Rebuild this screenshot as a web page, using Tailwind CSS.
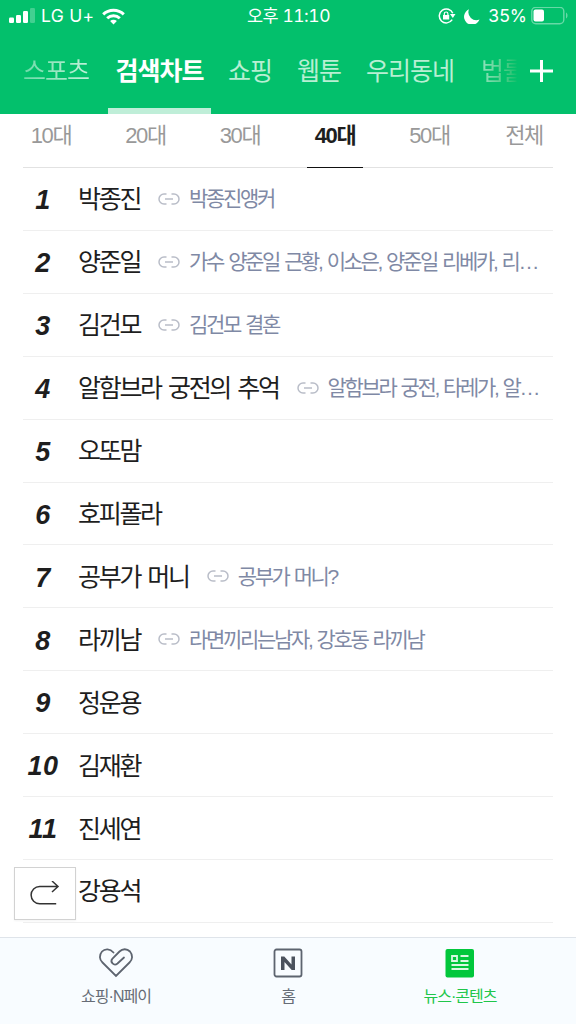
<!DOCTYPE html>
<html lang="ko">
    <head>
        <meta charset="UTF-8">
        <meta name="viewport" content="width=device-width, initial-scale=1.0">

        <script src="https://cdn.jsdelivr.net/npm/@tailwindcss/browser@4"></script>

        <title>검색차트</title>
    </head>
    <body class="bg-white font-['Liberation_Sans','Noto_Sans_CJK_KR',sans-serif]">
        <svg class="hidden">
            <symbol id="link" viewBox="0 0 22 12">
                <path d="M8.500 1H6a5 5 0 0 0 0 10h2.500M13.500 1H16a5 5 0 0 1 0 10h-2.500M7 6h8" fill="none" stroke="currentColor" stroke-width="1.500" />
            </symbol>
        </svg>

        <div class="relative flex flex-col w-[576px] h-[1024px] overflow-hidden">
            <header class="header h-[114px] shrink-0 bg-[#03c06c] text-white">
                <!-- Status bar -->
                <div class="status-bar grid grid-cols-[1fr_auto_1fr] items-center h-8 pl-[9px] pr-[8px] font-['Inter','Noto_Sans_CJK_KR',sans-serif] text-[17.5px] leading-8">
                    <div class="flex items-center">
                        <svg class="w-[26px] h-4" viewBox="0 0 26 16" fill="#fff">
                            <rect x="0" y="9.500" width="5" height="5.500" rx="1.200" />
                            <rect x="7" y="7" width="5" height="8" rx="1.200" />
                            <rect x="14" y="3" width="5" height="12" rx="1.200" />
                            <rect x="21" y="0" width="5" height="15" rx="1.200" opacity=".25" />
                        </svg>
                        <span class="ml-[6px] tracking-[0.3px]">LG U+</span>
                        <svg class="ml-2 w-[23px] h-[17px]" viewBox="0 0 23 17" fill="none" stroke="#fff" stroke-width="3">
                            <path d="M1.200 6.300a14.800 14.800 0 0 1 20.600 0" />
                            <path d="M5.200 10.300a9 9 0 0 1 12.600 0" />
                            <path d="M11.500 16.500l-3.400-3.500a4.900 4.900 0 0 1 6.800 0z" fill="#fff" stroke="none" />
                        </svg>
                    </div>
                    <div class="status-time tracking-[-0.5px] tabular-nums">오후 11:10</div>
                    <div class="flex justify-end items-center">
                        <svg class="w-[18px] h-4" viewBox="0 0 18 16">
                            <path d="M14.200 11.700A7 7 0 1 1 14.800 5.300" fill="none" stroke="#fff" stroke-width="1.500" />
                            <path d="M12 6h5.500l-2.700 4z" fill="#fff" />
                            <path d="M5 7h6.200v4.500H5z" fill="#fff" />
                            <path d="M6.300 7.500V5.800a1.800 1.800 0 0 1 3.600 0v1.700" fill="none" stroke="#fff" stroke-width="1.200" />
                        </svg>
                        <svg class="ml-2 w-4 h-[15px]" viewBox="0 0 16 15">
                            <path d="M5 .3A8 8 0 0 0 15.500 10.600 8 8 0 1 1 5 .3z" fill="#fff" />
                        </svg>
                        <span class="ml-2">35%</span>
                        <svg class="ml-1 w-[37px] h-[18px]" viewBox="0 0 37 18">
                            <rect x=".8" y=".3" width="32" height="16.400" rx="4" fill="none" stroke="#fff" stroke-opacity=".4" stroke-width="1.400" />
                            <rect x="2.500" y="2.500" width="10.500" height="12" rx="2" fill="#fff" />
                            <path d="M35 5.500v6c2-1 2-5 0-6z" fill="#fff" opacity=".4" />
                        </svg>
                    </div>
                </div>

                <!-- Menu -->
                <nav class="flex h-[82px] pl-[23px] text-[25px] leading-[79px] tracking-[-1px] whitespace-nowrap text-[#b8efd3]">
                    <a href="#" class="w-[85px]">
                        <span class="block w-[68px] bg-linear-to-r from-[#6bdba9] to-[#c4f2db] bg-clip-text text-transparent">스포츠</span>
                    </a>
                    <a href="#" class="flex justify-center w-[103px] border-b-[6px] border-[#bfeed8] font-bold text-white">검색차트</a>
                    <a href="#" class="ml-[17px] w-[69px]">쇼핑</a>
                    <a href="#" class="w-[69px]">웹툰</a>
                    <a href="#" class="w-[115px]">우리동네</a>
                    <a href="#" class="w-[36px] overflow-hidden bg-linear-to-r from-[#8fe3bd] to-[#03c06c] bg-clip-text text-transparent">법률</a>
                    <button class="ml-[13px] -mt-1">
                        <svg class="w-[23px] h-[23px]" viewBox="0 0 23 23" stroke="#fff" stroke-width="3">
                            <path d="M0 11h23M11.500 0v22" />
                        </svg>
                    </button>
                </nav>
            </header>

            <main class="main mx-[23px] flex-1">
                <!-- Age groups -->
                <section class="flex h-[54px] border-b border-[#e2e2e2] text-[22px] leading-[43px] tracking-[-1.4px] text-[#999]">
                    <a href="#" class="w-[56px] mr-[38.500px] text-center">10대</a>
                    <a href="#" class="w-[56px] mr-[38.500px] text-center">20대</a>
                    <a href="#" class="w-[56px] mr-[39px] text-center">30대</a>
                    <a href="#" class="w-[56px] h-[54px] mr-[38.500px] text-center font-bold text-[#1e1e1e] border-b-[1.500px] border-[#111]">40대</a>
                    <a href="#" class="w-[56px] mr-[38.500px] text-center">50대</a>
                    <a href="#" class="w-[56px] text-center">전체</a>
                </section>

                <!-- Ranking -->
                <ul id="ranking"></ul>
            </main>

            <button class="absolute left-[14px] top-[867px] w-[62px] h-[53px] flex items-center justify-center bg-white border border-[#d2d2d2] shadow-xs">
                <svg class="w-[30px] h-[26px]" viewBox="0 0 30 26" fill="none" stroke="#333" stroke-width="1.500">
                    <path d="M28 5.500H9.700a8.600 8.600 0 0 0 0 17.200h16.500M22 0l6 5.500-6 5.500" />
                </svg>
            </button>

            <!-- Bottom bar -->
            <footer class="relative grid grid-cols-3 h-[87px] shrink-0 px-[30px] bg-[#f8fcff] border-t border-[#dfe4ea] text-[16px] leading-6 tracking-[-1px] text-[#666c76]">
                <a href="#" class="flex flex-col items-center pt-[9px]">
                    <svg class="w-9 h-8" viewBox="0 0 36 32" fill="none" stroke="#5d646f" stroke-width="1.800" stroke-linecap="round">
                        <path d="M15.500 5.500C12 1.500 7 1.300 4 4.500 1 8 1.300 12.500 4.500 15.500L18 29 31.500 15.500C34.700 12.500 35 8 32 4.500 29 1.500 24.500 1.500 21.500 4.500L14.500 11.500C11.500 15 16 19.500 19.500 16.500L26 10.500" />
                    </svg>
                    <span class="mt-[6px]">쇼핑·N페이</span>
                </a>
                <a href="#" class="flex flex-col items-center pt-[9px]">
                    <svg class="w-8 h-8" viewBox="0 0 32 32" fill="none" stroke="#5d646f">
                        <rect x="2.500" y="2.500" width="27" height="27" rx="2" stroke-width="1.800" />
                        <path d="M9 9.500h3.300l7.200 8V9.500H23v13.500h-3.300l-7.200-8v8H9z" fill="#4b525d" stroke="none" />
                    </svg>
                    <span class="mt-[6px]">홈</span>
                </a>
                <a href="#" class="flex flex-col items-center pt-[9px] text-[#20c64a]">
                    <svg class="w-8 h-8" viewBox="0 0 32 32">
                        <rect x="1.500" y="2" width="28.500" height="28.500" rx="2" fill="#02c73c" />
                        <path d="M8 9h5v5H8zM16.500 9h8M16.500 14h8M7.500 18h17M7.500 22h17" fill="none" stroke="#d8f8e1" stroke-width="1.800" />
                    </svg>
                    <span class="mt-[6px]">뉴스·콘텐츠</span>
                </a>
            </footer>
        </div>

        <script>
            const keywords = [
                ['박종진', '박종진앵커'],
                ['양준일', '가수 양준일 근황, 이소은, 양준일 리베카, 리…'],
                ['김건모', '김건모 결혼'],
                ['알함브라 궁전의 추억', '알함브라 궁전, 타레가, 알…'],
                ['오또맘'],
                ['호피폴라'],
                ['공부가 머니', '공부가 머니?'],
                ['라끼남', '라면끼리는남자, 강호동 라끼남'],
                ['정운용'],
                ['김재환'],
                ['진세연'],
                ['강용석'],
            ];

            document.getElementById('ranking').innerHTML = keywords.map(([name, related], i) => `
                <li class="flex items-center h-[62.92px] border-b border-[#efefef] whitespace-nowrap">
                    <span class="w-[40px] mr-[15px] pt-[3px] text-center text-[27px] font-bold italic tracking-[0.5px] text-[#1e1e1e]">${i + 1}</span>
                    <span class="pt-px text-[25px] leading-9 tracking-[-2.3px] [word-spacing:2.5px] text-[#1e1e1e]">${name}</span>
                    ${related ? `
                    <svg class="ml-[18px] mr-[9px] w-[22px] h-3 shrink-0 text-[#b9bdc8]"><use href="#link" /></svg>
                    <span class="pt-px text-[21px] leading-9 tracking-[-2.35px] [word-spacing:1.6px] text-[#7f89a5]">${related}</span>` : ''}
                </li>`).join('');
        </script>
    </body>
</html>
